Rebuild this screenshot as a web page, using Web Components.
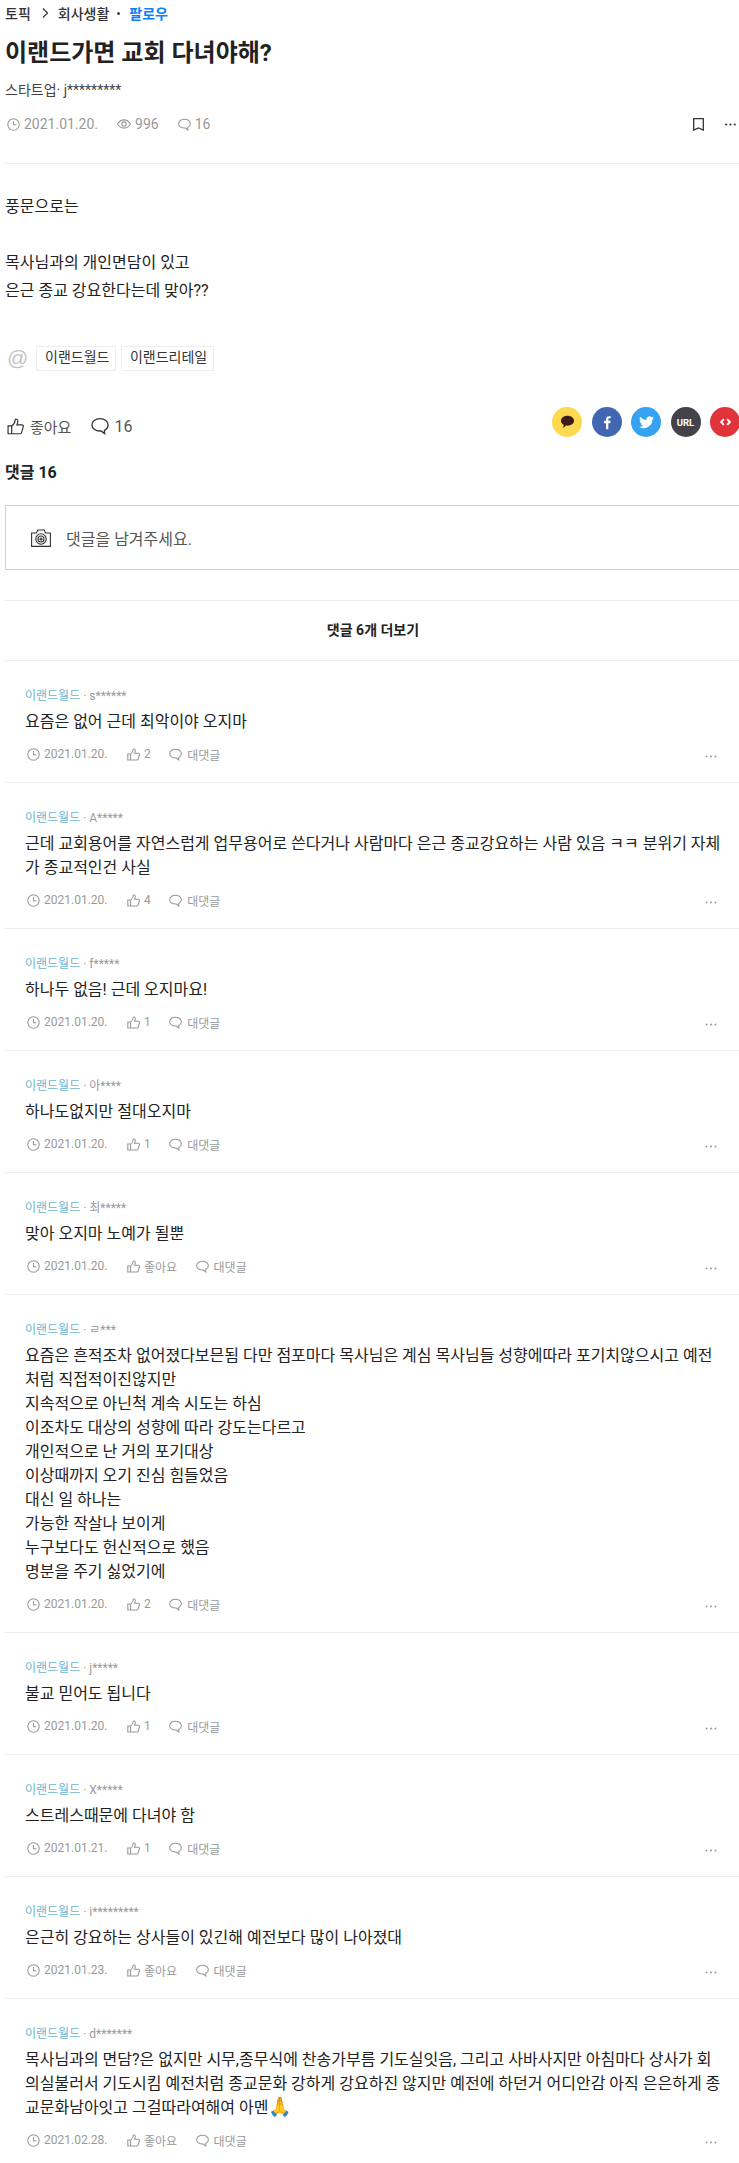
<!DOCTYPE html>
<html lang="ko"><head><meta charset="utf-8"><title>이랜드가면 교회 다녀야해?</title>
<style>
html,body{margin:0;padding:0;background:#fff;overflow:hidden}
body{font-family:Roboto,"Noto Sans CJK KR",sans-serif;color:#222;width:739px;height:2163px}
</style></head><body>
<topic-page>
  <post-header slot="head" topic="회사생활" title="이랜드가면 교회 다녀야해?" author="스타트업· j*********" date="2021.01.20." views="996" count="16"></post-header>
  <post-body slot="body">
    <p>풍문으로는</p><p><br></p><p>목사님과의 개인면담이 있고</p><p>은근 종교 강요한다는데 맞아??</p>
  </post-body>
  <tag-row slot="tags"><tag-chip>이랜드월드</tag-chip><tag-chip>이랜드리테일</tag-chip></tag-row>
  <action-bar slot="actions" count="16"></action-bar>
  <comment-box slot="box" count="16"></comment-box>
  <more-comments slot="more">댓글 6개 더보기</more-comments>
  <post-comment slot="list" user="s******" date="2021.01.20." likes="2">요즘은 없어 근데 최악이야 오지마</post-comment>
  <post-comment slot="list" user="A*****" date="2021.01.20." likes="4">근데 교회용어를 자연스럽게 업무용어로 쓴다거나 사람마다 은근 종교강요하는 사람 있음 ㅋㅋ 분위기 자체가 종교적인건 사실</post-comment>
  <post-comment slot="list" user="f*****" date="2021.01.20." likes="1">하나두 없음! 근데 오지마요!</post-comment>
  <post-comment slot="list" user="아****" date="2021.01.20." likes="1">하나도없지만 절대오지마</post-comment>
  <post-comment slot="list" user="최*****" date="2021.01.20." likes="">맞아 오지마 노예가 될뿐</post-comment>
  <post-comment slot="list" user="ㄹ***" date="2021.01.20." likes="2">요즘은 흔적조차 없어졌다보믄됨 다만 점포마다 목사님은 계심 목사님들 성향에따라 포기치않으시고 예전처럼 직접적이진않지만<br>지속적으로 아닌척 계속 시도는 하심<br>이조차도 대상의 성향에 따라 강도는다르고<br>개인적으로 난 거의 포기대상<br>이상때까지 오기 진심 힘들었음<br>대신 일 하나는<br>가능한 작살나 보이게<br>누구보다도 헌신적으로 했음<br>명분을 주기 싫었기에</post-comment>
  <post-comment slot="list" user="j*****" date="2021.01.20." likes="1">불교 믿어도 됩니다</post-comment>
  <post-comment slot="list" user="X*****" date="2021.01.21." likes="1">스트레스때문에 다녀야 함</post-comment>
  <post-comment slot="list" user="i*********" date="2021.01.23." likes="">은근히 강요하는 상사들이 있긴해 예전보다 많이 나아졌대</post-comment>
  <post-comment slot="list" last user="d*******" date="2021.02.28." likes="">목사님과의 면담?은 없지만 시무,종무식에 찬송가부름 기도실잇음, 그리고 사바사지만 아침마다 상사가 회의실불러서 기도시킴 예전처럼 종교문화 강하게 강요하진 않지만 예전에 하던거 어디안감 아직 은은하게 종교문화남아잇고 그걸따라여해여 아멘<span style="font-size:19px;line-height:1">🙏</span></post-comment>
</topic-page>
<script>
const I={
clock:'<circle cx="8" cy="8" r="7"/><path d="M8 3.800v4.600h3.600"/>',
eye:'<path d="M.6 8C2.500 4.800 5 3.300 8 3.300S13.500 4.800 15.400 8C13.500 11.200 11 12.700 8 12.700S2.500 11.200.6 8Z"/><circle cx="8" cy="8" r="2.500"/>',
bubble:'<path d="M8 1.500c4 0 7.200 2.300 7.200 5.500 0 2.300-1.500 3.900-3.300 4.800l.2 3-3.200-2.400H8C4 12.400.8 10.100.8 7S4 1.500 8 1.500Z"/>',
thumb:'<path d="M1 7.400h3.400v7.400H1zM4.400 7.600c1.700-1.100 3.100-3.100 3.300-6 .1-.8 2.500-.7 2.500 1.300 0 1.300-.4 2.500-.9 3.600h4.700c1 0 1.600.8 1.300 1.800l-1.600 5.500c-.2.700-.7 1-1.300 1H4.400"/>'
};
const ic=(n,s,w=1.3)=>`<svg width="${s}" height="${s}" viewBox="0 0 16 16" fill="none" stroke="currentColor" stroke-width="${w}" aria-hidden="true">${I[n]}</svg>`;
class Base extends HTMLElement{
  html(h){this.attachShadow({mode:'open'}).innerHTML=h}
}
customElements.define('topic-page',class extends Base{connectedCallback(){this.html(`<style>
:host{display:block;width:739px;padding-left:5px;box-sizing:border-box}
</style><slot name="head"></slot><slot name="body"></slot><slot name="tags"></slot><slot name="actions"></slot><slot name="box"></slot><slot name="more"></slot><slot name="list"></slot>`)}});
customElements.define('post-header',class extends Base{connectedCallback(){const a=n=>this.getAttribute(n);this.html(`<style>
:host{display:block;height:163px;border-bottom:1px solid #eee;color:#222}
.crumb{display:flex;align-items:center;height:26px;font-size:14px;font-weight:500;color:#333}
.crumb svg{margin:0 7px 0 8px}
.dot{width:3px;height:3px;border-radius:50%;background:#444;margin:0 9px 0 8px}
.fol{color:#0a80ff;font-weight:700}
h1{margin:13px 0 0;font-size:24px;line-height:28px;font-weight:700;color:#222}
.au{margin-top:13px;font-size:14px;line-height:20px;color:#444}
.meta{display:flex;align-items:center;margin-top:14px;height:20px;font-size:14px;color:#999}
.meta svg{margin-right:4px}
.date{margin-right:19px}.v{margin-right:19px}
.r{margin-left:auto;display:flex;align-items:center;color:#333;gap:21px;padding-right:3px}
.r svg{margin:0}
</style>
<div class="crumb"><span>토픽</span><svg width="12" height="12" viewBox="0 0 12 12" fill="none" stroke="#333" stroke-width="1.2"><path d="M4 1.500 8.500 6 4 10.500"/></svg><span>회사생활</span><i class="dot"></i><span class="fol">팔로우</span></div>
<h1>${a('title')}</h1>
<div class="au">${a('author')}</div>
<div class="meta"><span style="display:flex;margin-left:2px">${ic('clock',13)}</span><span class="date">${a('date')}</span>${ic('eye',14)}<span class="v">${a('views')}</span>${ic('bubble',13)}<span>${a('count')}</span>
<div class="r"><svg width="11" height="13" viewBox="0 0 11 13" fill="none" stroke="#333" stroke-width="1.300"><path d="M.7.7h9.600v11.400L5.500 10 .7 12.100z"/></svg><svg width="11" height="3" viewBox="0 0 11 3" fill="#333"><circle cx="1.200" cy="1.500" r="1.100"/><circle cx="5.500" cy="1.500" r="1.100"/><circle cx="9.800" cy="1.500" r="1.100"/></svg></div></div>`)}});
customElements.define('post-body',class extends Base{connectedCallback(){this.html(`<style>
:host{display:block;padding-top:29px;font-size:16px;line-height:28px;color:#222}
::slotted(p){margin:0}
</style><slot></slot>`)}});
customElements.define('tag-row',class extends Base{connectedCallback(){this.html(`<style>
:host{display:flex;align-items:center;margin-top:41px;height:25px}
.at{width:31px;font-size:21px;line-height:23px;margin-bottom:2px;color:#c4c4c4;padding-left:2px;box-sizing:border-box;font-family:"Liberation Sans",sans-serif}
</style><span class="at">@</span><slot></slot>`)}});
customElements.define('tag-chip',class extends Base{connectedCallback(){this.html(`<style>
:host{display:block;border:1px solid #eee;height:25px;box-sizing:border-box;padding:0 6px 0 8px;font-size:14px;line-height:21px;color:#333;margin-right:4.500px}
</style><slot></slot>`)}});
customElements.define('action-bar',class extends Base{connectedCallback(){const c=(bg,inner)=>`<span class="c" style="background:${bg}">${inner}</span>`;this.html(`<style>
:host{display:flex;align-items:center;margin-top:39px;height:32px;color:#555;font-size:15px}
.a{display:flex;align-items:center;color:#333}
.t{margin:0 20px 0 6px;color:#555}.n{margin-left:5px;color:#555;font-size:16px}
.s{display:flex;gap:9.500px;margin:0 -1px 8px auto}
.c{width:30px;height:30px;border-radius:50%;display:flex;align-items:center;justify-content:center;color:#fff;font:700 9.500px Roboto,sans-serif;flex:none}
</style>
<span class="a" style="margin-left:2px">${ic('thumb',17,1.1)}</span><span class="t">좋아요</span>
<span class="a">${ic('bubble',18,1.2)}</span><span class="n">16</span>
<span class="s">
${c('#fed84f','<svg width="15" height="14" viewBox="0 0 16 15"><path fill="#3d1d1c" d="M8 .8c4 0 7 2.300 7 5.300s-3 5.300-7 5.300c-.5 0-1 0-1.500-.1L3.400 13.800l.5-3.300C2 9.500 1 7.900 1 6.100 1 3.100 4 .8 8 .8Z"/></svg>')}
${c('#4267b2','<svg width="10" height="15" viewBox="0 0 12 18"><path fill="#fff" d="M7.600 17V9.800h2.300l.4-2.800H7.600V5.300c0-.8.300-1.300 1.400-1.300h1.400V1.500C10.100 1.500 9.300 1.400 8.400 1.400 6.300 1.400 4.900 2.700 4.900 5v2H2.600v2.800h2.300V17z"/></svg>')}
${c('#35a2f4','<svg width="15" height="13" viewBox="0 0 24 20"><path fill="#fff" d="M24 2.400c-.9.400-1.800.7-2.800.8 1-.6 1.800-1.600 2.200-2.700-1 .6-2 1-3.100 1.200A4.900 4.900 0 0 0 11.900 6.200C7.800 6 4.200 4 1.700.9c-1.300 2.300-.6 5.100 1.500 6.500-.8 0-1.500-.2-2.200-.6 0 2.300 1.700 4.400 3.900 4.900-.7.200-1.500.2-2.200.1.600 2 2.400 3.400 4.600 3.400A9.900 9.900 0 0 1 0 16.700 14 14 0 0 0 21.600 4.900c1-.7 1.800-1.500 2.400-2.500Z"/></svg>')}
${c('#434349','URL')}
${c('#e0333a','<svg width="11" height="8" viewBox="0 0 13 9" fill="none" stroke="#fff" stroke-width="2.200"><path d="M4.500 1 1.300 4.500 4.500 8M8.500 1l3.200 3.500L8.500 8"/></svg>')}
</span>`)}});
customElements.define('comment-box',class extends Base{connectedCallback(){this.html(`<style>
:host{display:block}
h2{margin:19px 0 0;font-size:16px;line-height:24px;font-weight:700;color:#222}
.b{margin-top:20px;height:65px;box-sizing:border-box;border:1px solid #d0d0d0;border-right:none;display:flex;align-items:center;padding-left:25px;font-size:16px;color:#555}
svg{margin-right:15px}
hr{margin:30px 0 0;border:0;border-top:1px solid #eee}
</style><h2>댓글 ${this.getAttribute('count')}</h2>
<div class="b"><svg width="20" height="18" viewBox="0 0 20 18" fill="none" stroke="#333" stroke-width="1.100"><path d="M.6 4h4.800l1.400-3h6.400l1.400 3h4.800v13.400H.6z"/><circle cx="10" cy="10" r="5.200"/><circle cx="10" cy="10" r="3"/><circle cx="10" cy="10" r="1"/></svg><span>댓글을 남겨주세요.</span></div><hr>`)}});
customElements.define('more-comments',class extends Base{connectedCallback(){this.html(`<style>
:host{display:block;height:59px;line-height:58px;padding-left:2px;border-bottom:1px solid #eee;text-align:center;font-size:14px;font-weight:700;color:#222}
</style><slot></slot>`)}});
customElements.define('post-comment',class extends Base{connectedCallback(){const a=n=>this.getAttribute(n),l=a('likes');this.html(`<style>
:host{display:block;padding:26px 15px 19px 20px;border-bottom:1px solid #eee}
:host([last]){border-bottom:0;padding-bottom:14px}
.m{font-size:12px;line-height:18px;color:#999}.m b{font-weight:400;color:#6cb6d0}
.t{margin-top:5px;font-size:16px;line-height:24px;color:#222;word-break:break-all}
.f{margin-top:11px;height:18px;display:flex;align-items:center;font-size:12px;color:#999}
svg{flex:none}
.ck,.th,.bb{display:flex}
.ck{margin:0 4px 0 2px}.d{margin-right:19.500px}.th{margin-right:4px}.lk{margin-right:18.500px}.bb{margin-right:5px}
.dots{margin-left:auto;position:relative;top:2px;margin-right:7px}
</style><div class="m"><b>이랜드월드</b> · ${a('user')}</div>
<div class="t"><slot></slot></div>
<div class="f"><span class="ck">${ic('clock',13)}</span><span class="d">${a('date')}</span><span class="th">${ic('thumb',13)}</span><span class="lk">${l||'좋아요'}</span><span class="bb">${ic('bubble',13)}</span><span>대댓글</span>
<svg class="dots" width="12" height="3" viewBox="0 0 12 3" fill="#999"><circle cx="1.500" cy="1.500" r="1"/><circle cx="6" cy="1.500" r="1"/><circle cx="10.500" cy="1.500" r="1"/></svg></div>`)}});
</script>
</body></html>
